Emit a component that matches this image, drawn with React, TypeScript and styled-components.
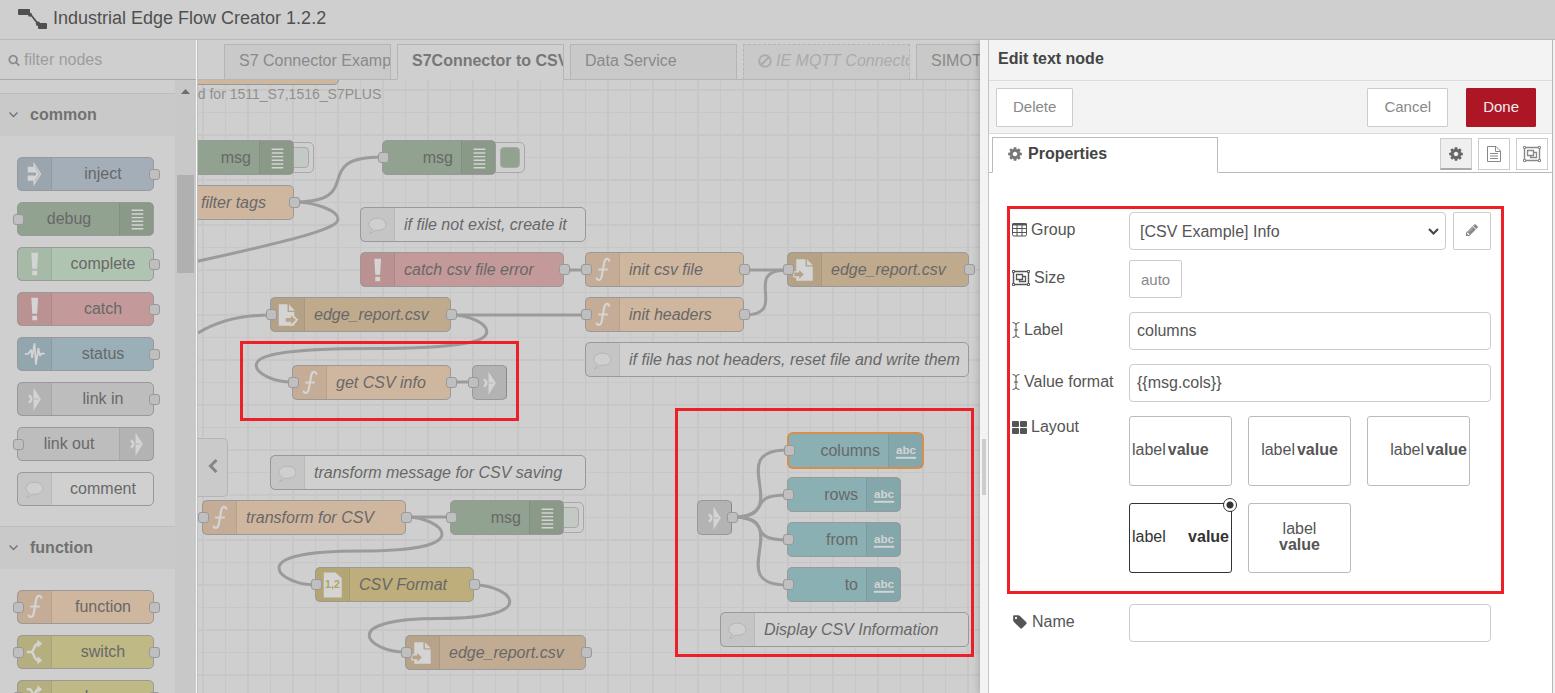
import React from "react";
import styled, { createGlobalStyle, css } from "styled-components";

const GlobalStyle = createGlobalStyle`
  *, *::before, *::after { box-sizing: border-box; }
  body { margin: 0; }
  body, button, input, select { font-family: "Liberation Sans", Arial, sans-serif; font-size: 16px; }
`;

const ink = {
  shade: "#cfcfcf",
  shadeDark: "#c9c9c9",
  line: "#b5b5b5",
  nodeLine: "#999999",
  glyph: "#d4d4d4",
  mark: "#ee2027",
};

/* ---------- icons ---------- */

type GlyphName =
  | "inject" | "debug" | "alert" | "status" | "link" | "comment"
  | "function" | "switch" | "change" | "fileIn" | "fileOut" | "csv" | "text";

const linkPaint = (
  <>
    <path d="M16 5.500 L23.500 17 L16 29 Z" fill={ink.glyph} />
    <path d="M11 13.500 A4 3.700 0 0 1 11 20.500" fill="none" stroke={ink.glyph} strokeWidth="2.500" />
    <path d="M15 17 H21" stroke="#b5b5b5" strokeWidth="1" />
  </>
);

const glyphs: Record<GlyphName, React.ReactNode> = {
  inject: (
    <>
      <path d="M10 9.500 H16 V4.500 L24 17 L16 29.500 V24 H10 V18.500 H18.500 V15.500 H10 Z" fill={ink.glyph} />
      <path d="M17.500 9.500 L22 17 L17.500 24.500" fill="none" stroke="#a0a9b3" strokeWidth="0.800" />
    </>
  ),
  debug: (
    <path d="M12 8H24M12 11.800H24M12 15.600H24M12 19.400H24M12 23.200H24M12 27H24" stroke={ink.glyph} strokeWidth="1.500" />
  ),
  alert: (
    <path d="M13.700 5.500 H20.700 L19.700 22 H14.700 Z M14.700 24 H19.700 V28.500 H14.700 Z" fill={ink.glyph} />
  ),
  status: (
    <path d="M7 17 H10.500 L13.500 12.500 L14.500 21 L17 6 L18.500 28 L21 11 L22.500 19 L24 16.500 H27.500" fill="none" stroke={ink.glyph} strokeWidth="1.800" strokeLinejoin="bevel" />
  ),
  link: linkPaint,
  comment: (
    <path d="M12 21.500 C5 18 8 10 17 10 C28 10 29 22.500 17 22.500 L14.500 22.300 Q12 25.500 8.500 26 Q11.500 24 12 21.500 Z" fill="#cfcfcf" stroke="#b3b3b3" strokeWidth="1" />
  ),
  function: (
    <>
      <path d="M24 7.500 C23 4.300 19.500 4.800 18.700 9.500 L16.300 23 C15.500 28 12.500 28 11 25.800" fill="none" stroke={ink.glyph} strokeWidth="2.300" strokeLinecap="round" />
      <path d="M12.500 16.500 H22.500" stroke={ink.glyph} strokeWidth="2" />
    </>
  ),
  switch: (
    <>
      <path d="M9 17 H14 C17 16 16 8.500 21 8.500 M14 17 C17 18 16 25.500 21 25.500" fill="none" stroke={ink.glyph} strokeWidth="2.500" />
      <path d="M20 4.500 L25 8.500 L20 12.500 Z M20 21.500 L25 25.500 L20 29.500 Z" fill={ink.glyph} />
    </>
  ),
  change: (
    <>
      <path d="M9 9 H12 C16 9 16 25 21 25 M9 25 H12 C16 25 16 9 21 9" fill="none" stroke={ink.glyph} strokeWidth="2.500" />
      <path d="M20 5 L25 9 L20 13 Z M20 21 L25 25 L20 29 Z" fill={ink.glyph} />
    </>
  ),
  fileIn: (
    <>
      <path d="M8 6 H17 V14 H24 V18 L28 22 L24 27 V28 H8 Z" fill={ink.glyph} />
      <path d="M18.500 6 L24.500 12.500 H18.500 Z" fill={ink.glyph} />
      <path d="M14.500 19.500 H20 V16 L26.500 22 L20 28 V24.500 H14.500 Z" fill="#b9a58a" stroke={ink.glyph} strokeWidth="1.200" />
    </>
  ),
  fileOut: (
    <>
      <path d="M8.500 6 H18 V13.500 H25.500 V28 H8.500 Z" fill={ink.glyph} />
      <path d="M19.500 6 L25.500 12 H19.500 Z" fill={ink.glyph} />
      <path d="M6 19 H11 V15.500 L17 21.500 L11 27.500 V24 H6 Z" fill="#b5a088" stroke={ink.glyph} strokeWidth="1.200" />
    </>
  ),
  csv: (
    <>
      <path d="M8 4 H20 L26.500 10 V30 H8 Z" fill={ink.glyph} />
      <text x="17" y="20.500" textAnchor="middle" fontSize="11" fontWeight="bold" fill="#b3a264">1,2</text>
    </>
  ),
  text: (
    <>
      <text x="17.500" y="20" textAnchor="middle" fontSize="12" fontWeight="bold" fill={ink.glyph}>abc</text>
      <path d="M7 24 H28" stroke={ink.glyph} strokeWidth="2" />
    </>
  ),
};

const GlyphSvg = styled.svg`
  display: block;
  width: 34px;
  height: 34px;
`;

const Glyph = ({ name }: { name: GlyphName }) => (
  <GlyphSvg viewBox="0 0 34 34" aria-hidden="true">{glyphs[name]}</GlyphSvg>
);

const solid = {
  cog: "M1152 896q0-106-75-181t-181-75-181 75-75 181 75 181 181 75 181-75 75-181zm512-109v222q0 12-8 23t-20 13l-185 28q-19 54-39 91 35 50 107 138 10 12 10 25t-9 23q-27 37-99 108t-94 71q-12 0-26-9l-138-108q-44 23-91 38-16 136-29 186-7 28-36 28h-222q-14 0-24.500-8.500t-11.500-21.500l-28-184q-49-16-90-37l-141 107q-10 9-25 9-14 0-25-11-126-114-165-168-7-10-7-23 0-12 8-23 15-21 51-66.500t54-70.500q-27-50-41-99l-183-27q-13-2-21-12.500t-8-23.500v-222q0-12 8-23t19-13l186-28q14-46 39-92-40-57-107-138-10-12-10-24 0-10 9-23 26-36 98.500-107.500t94.500-71.500q13 0 26 10l138 107q44-23 91-38 16-136 29-186 7-28 36-28h222q14 0 24.500 8.500t11.500 21.500l28 184q49 16 90 37l142-107q9-9 24-9 13 0 25 10 129 119 165 170 7 8 7 22 0 12-8 23-15 21-51 66.500t-54 70.500q26 50 41 98l183 28q13 2 21 12.500t8 23.500z",
  search: "M1216 832q0-185-131.500-316.500t-316.500-131.500-316.500 131.500-131.500 316.500 131.500 316.500 316.500 131.500 316.500-131.500 131.500-316.500zm512 832q0 52-38 90t-90 38q-54 0-90-38l-343-342q-179 124-399 124-143 0-273.500-55.500t-225-150-150-225-55.500-273.500 55.500-273.500 150-225 225-150 273.500-55.500 273.500 55.500 225 150 150 225 55.500 273.500q0 220-124 399l343 343q37 37 37 90z",
  tag: "M576 448q0-53-37.500-90.500t-90.500-37.500-90.500 37.500-37.500 90.500 37.500 90.500 90.500 37.500 90.500-37.500 37.500-90.500zm1067 576q0 53-37 90l-491 492q-39 37-91 37-53 0-90-37l-715-716q-38-37-64.500-101t-26.500-117v-416q0-52 38-90t90-38h416q53 0 117 26.500t102 64.500l715 714q37 39 37 91z",
  pencil: "M491 1536l91-91-235-235-91 91v107h128v128h107zm523-928q0-22-22-22-10 0-17 7l-542 542q-7 7-7 17 0 22 22 22 10 0 17-7l542-542q7-7 7-17zm-54-192l416 416-832 832h-416v-416zm683 96q0 53-37 90l-166 166-416-416 166-165q36-38 90-38 53 0 91 38l235 234q37 39 37 91z",
};

const Solid = ({ name, size = 16 }: { name: keyof typeof solid; size?: number }) => (
  <svg width={size} height={size} viewBox="0 0 1792 1792" fill="currentColor" aria-hidden="true">
    <path d={solid[name]} />
  </svg>
);

const GridIcon = () => (
  <svg width="15" height="14" viewBox="0 0 15 14" aria-hidden="true">
    <rect x="0.500" y="0.500" width="14" height="12.500" rx="1.500" fill="none" stroke="currentColor" />
    <path d="M0 1.500H15" stroke="currentColor" strokeWidth="2" />
    <path d="M0 5.500H15M0 9.500H15M5 2V13M10 2V13" stroke="currentColor" />
  </svg>
);

const SizeIcon = () => (
  <svg width="18" height="16" viewBox="0 0 18 16" fill="none" stroke="currentColor" aria-hidden="true">
    <path d="M2.500 1.500H15.500M2.500 14.500H15.500M1.500 2.500V13.500M16.500 2.500V13.500" strokeWidth="1.400" />
    <path d="M0.500 0.500h2v2h-2zM15.500 0.500h2v2h-2zM0.500 13.500h2v2h-2zM15.500 13.500h2v2h-2z" />
    <path d="M4.500 4.500h6v5h-6z M10.500 6.500h3v5h-6v-2" strokeWidth="1.300" />
  </svg>
);

const CursorIcon = () => (
  <svg width="8" height="16" viewBox="0 0 8 16" fill="none" stroke="currentColor" aria-hidden="true">
    <path d="M0.500 0.500Q4 0.500 4 3V13Q4 15.500 0.500 15.500M7.500 0.500Q4 0.500 4 3M7.500 15.500Q4 15.500 4 13M2 8H6" />
  </svg>
);

const TilesIcon = () => (
  <svg width="15" height="13" viewBox="0 0 15 13" fill="currentColor" aria-hidden="true">
    <rect width="7" height="6" rx="1" /><rect x="8" width="7" height="6" rx="1" />
    <rect y="7" width="7" height="6" rx="1" /><rect x="8" y="7" width="7" height="6" rx="1" />
  </svg>
);

const PageIcon = () => (
  <svg width="14" height="16" viewBox="0 0 14 16" fill="none" stroke="currentColor" aria-hidden="true">
    <path d="M0.500 0.500H9L13.500 5V15.500H0.500Z M8.500 0.500V5.500H13.500 M3 7.500H11M3 10H11M3 12.500H11" />
  </svg>
);

const BanSvg = styled.svg`
  flex: none;
  width: 14px;
  height: 14px;
`;

const BanIcon = () => (
  <BanSvg viewBox="0 0 14 14" fill="none" stroke="currentColor" strokeWidth="2" aria-hidden="true">
    <circle cx="7" cy="7" r="5.800" /><path d="M11 3L3 11" />
  </BanSvg>
);

const Logo = () => (
  <svg width="30" height="21" viewBox="0 0 30 21" fill="#4f4f4f" aria-hidden="true">
    <rect width="12" height="6" rx="1" />
    <rect x="20" y="14" width="9" height="6" rx="1" />
    <path d="M10 3.500 C14 5 17 13 22 16.500" fill="none" stroke="#4f4f4f" strokeWidth="1.800" />
    <circle cx="12" cy="5.800" r="2" /><circle cx="20" cy="14.800" r="2.200" />
  </svg>
);

/* ---------- page frame ---------- */

const Page = styled.div`
  display: flex;
  flex-direction: column;
  height: 100vh;
  overflow: hidden;
  background: ${ink.shade};
  color: #666;
`;

const Header = styled.header`
  display: flex;
  flex: none;
  align-items: center;
  gap: 5px;
  height: 40px;
  padding: 0 18px;
  border-bottom: 1px solid #bababa;
`;

const Title = styled.h1`
  margin: 0;
  padding-bottom: 4px;
  font-size: 18px;
  font-weight: normal;
  line-height: 20px;
  color: #505050;
`;

const Main = styled.main`
  display: flex;
  flex: 1;
  min-height: 0;
  overflow: hidden;
`;

/* ---------- palette ---------- */

const Palette = styled.aside`
  display: flex;
  flex: none;
  flex-direction: column;
  width: 198px;
  border-right: 1px solid #c0c0c0;
  box-shadow: inset -1px 0 #f6f6f6;
`;

const SearchBar = styled.label`
  display: flex;
  flex: none;
  align-items: center;
  gap: 4px;
  height: 40px;
  margin-right: 1px;
  padding: 0 8px;
  border-bottom: 1px solid #a9a9a9;
  color: #8a8a8a;
`;

const SearchInput = styled.input`
  flex: 1;
  min-width: 0;
  padding: 0;
  border: 0;
  outline: 0;
  background: none;
  &::placeholder { color: #9d9d9d; opacity: 1; }
`;

const PaletteBody = styled.div`
  display: flex;
  flex: 1;
  min-height: 0;
  margin-right: 1px;
`;

const PaletteList = styled.div`
  flex: 1;
  padding-top: 13px;
  overflow: hidden;
`;

const ScrollTrack = styled.div`
  display: flex;
  flex: none;
  flex-direction: column;
  align-items: center;
  width: 21px;
  padding-top: 9px;
  background: #c8c8c8;
`;

const ScrollArrow = styled.svg`
  flex: none;
  width: 9px;
  height: 5px;
`;

const ScrollThumb = styled.div`
  flex: none;
  width: 17px;
  height: 98px;
  margin-top: 81px;
  background: #b0b0b0;
`;

const Category = styled.h2`
  display: flex;
  align-items: center;
  gap: 12px;
  height: 43px;
  margin: 0;
  padding: 0 9px;
  border-top: 1px solid #bdbdbd;
  background: #c9c9c9;
  font-size: 16px;
  color: #717171;
`;

const CategoryNodes = styled.div`
  display: flex;
  flex-direction: column;
  gap: 11px;
  padding: 21px 21px 20px 17px;
`;

/* ---------- nodes ---------- */

interface Skin { $color: string; $selected?: boolean }

const nodeSkin = css<Skin>`
  display: flex;
  height: 34px;
  border: 1px solid ${ink.nodeLine};
  border-radius: 5px;
  background: ${(p) => p.$color};
  line-height: 32px;
  white-space: nowrap;
`;

const PaletteItem = styled.div<Skin>`
  ${nodeSkin}
  position: relative;
`;

const CanvasItem = styled.div<Skin & { $x: number; $y: number; $w: number }>`
  ${nodeSkin}
  position: absolute;
  left: ${(p) => p.$x}px;
  top: ${(p) => p.$y}px;
  width: ${(p) => p.$w}px;
  height: 35px;
  line-height: 34px;
  ${(p) => p.$selected && "box-shadow: 0 0 0 1px #d78e4c; border-color: #d78e4c;"}
`;

const IconZone = styled.div<{ $right?: boolean }>`
  display: flex;
  flex: none;
  align-items: center;
  order: ${(p) => (p.$right ? 1 : 0)};
  width: 34px;
  overflow: hidden;
  background: rgba(0, 0, 0, 0.05);
  ${(p) => (p.$right ? "border-left" : "border-right")}: 1px solid rgba(0, 0, 0, 0.06);
`;

const NodeLabel = styled.span<{ $align: "left" | "center" | "right"; $italic?: boolean }>`
  flex: 1;
  min-width: 0;
  padding: 0 8px 0 9px;
  text-align: ${(p) => p.$align};
  font-style: ${(p) => (p.$italic ? "italic" : "normal")};
  color: #686868;
`;

const Port = styled.i<{ $side: "in" | "out" }>`
  position: absolute;
  top: 11px;
  ${(p) => (p.$side === "in" ? "left: -5px" : "right: -7px")};
  width: 11px;
  height: 11px;
  border: 1px solid ${ink.nodeLine};
  border-radius: 3px;
  background: #bfbfbf;
`;

const Toggle = styled.button<{ $on?: boolean }>`
  position: absolute;
  z-index: -1;
  top: 1px;
  right: ${(p) => (p.$on ? "-30px" : "-21px")};
  width: 36px;
  height: 31px;
  padding: 4px 4px 4px 0;
  border: 1px solid #a8a8a8;
  border-radius: 5px;
  background: ${ink.shade};
  &::after {
    content: "";
    display: block;
    width: ${(p) => (p.$on ? "20px" : "26px")};
    height: 100%;
    margin-left: auto;
    border: 1px solid #a8a8a8;
    border-radius: 4px;
    background: ${(p) => (p.$on ? "#91a28f" : "#c3c9c4")};
  }
`;

interface NodeSpec {
  label?: string;
  color: string;
  icon?: GlyphName;
  right?: boolean;
  input?: boolean;
  output?: boolean;
}

const colors = {
  debug: "#92a290",
  catch: "#c39a99",
  func: "#cfb69f",
  file: "#bfaa8e",
  link: "#bdbdbd",
  comment: "#d0d0d0",
  ui: "#8bb0b4",
};

const common: NodeSpec[] = [
  { label: "inject", color: "#a4aeb8", icon: "inject", output: true },
  { label: "debug", color: colors.debug, icon: "debug", right: true, input: true },
  { label: "complete", color: "#b0c5b1", icon: "alert", output: true },
  { label: "catch", color: colors.catch, icon: "alert", output: true },
  { label: "status", color: "#9aafb8", icon: "status", output: true },
  { label: "link in", color: colors.link, icon: "link", output: true },
  { label: "link out", color: colors.link, icon: "link", right: true, input: true },
  { label: "comment", color: colors.comment, icon: "comment" },
];

const functions: NodeSpec[] = [
  { label: "function", color: colors.func, icon: "function", input: true, output: true },
  { label: "switch", color: "#bfb986", icon: "switch", input: true, output: true },
  { label: "change", color: "#bfb986", icon: "change", input: true, output: true },
];

const NodeContent = ({ node, align, italic }: { node: NodeSpec; align: "left" | "center" | "right"; italic?: boolean }) => (
  <>
    {node.icon && <IconZone $right={node.right}><Glyph name={node.icon} /></IconZone>}
    {node.label && <NodeLabel $align={align} $italic={italic}>{node.label}</NodeLabel>}
    {node.input && <Port $side="in" />}
    {node.output && <Port $side="out" />}
  </>
);

const PaletteGroup = ({ name, nodes }: { name: string; nodes: NodeSpec[] }) => (
  <section>
    <Category>
      <svg width="9" height="6" viewBox="0 0 9 6" fill="none" stroke="currentColor" strokeWidth="1.300" aria-hidden="true">
        <path d="M0.500 0.500L4.500 4.500L8.500 0.500" />
      </svg>
      {name}
    </Category>
    <CategoryNodes>
      {nodes.map((n) => (
        <PaletteItem key={n.label} $color={n.color}><NodeContent node={n} align="center" /></PaletteItem>
      ))}
    </CategoryNodes>
  </section>
);

/* ---------- workspace ---------- */

const Workspace = styled.section`
  display: flex;
  flex: 1;
  flex-direction: column;
  min-width: 0;
  overflow: hidden;
`;

const TabBar = styled.nav`
  display: flex;
  flex: none;
  align-items: flex-end;
  gap: 6px;
  height: 40px;
  padding-left: 26px;
  box-shadow: inset 0 -1px ${ink.line};
`;

const Tab = styled.button<{ $state?: "active" | "disabled" }>`
  display: flex;
  flex: none;
  align-items: center;
  gap: 4px;
  width: 167px;
  height: 36px;
  padding: 0 0 2px 14px;
  overflow: hidden;
  border: 1px solid ${ink.line};
  background: ${ink.shadeDark};
  color: #8a8a8a;
  white-space: nowrap;
  ${(p) => p.$state === "active" && css`
    border-bottom-color: ${ink.shade};
    background: ${ink.shade};
    color: #777;
    font-weight: bold;
  `}
  ${(p) => p.$state === "disabled" && css`
    border-style: dashed;
    border-bottom-style: solid;
    color: #ababab;
    font-style: italic;
  `}
`;

const Canvas = styled.div`
  position: relative;
  z-index: 0;
  flex: 1;
  overflow: hidden;
  background-color: ${ink.shade};
  background-image:
    linear-gradient(to right, #c7c7c7 2px, transparent 2px),
    linear-gradient(to right, #c7c7c7 1px, transparent 1px),
    linear-gradient(#c7c7c7 2px, transparent 2px),
    linear-gradient(#c7c7c7 1px, transparent 1px);
  background-size: 45px 45px;
  background-position: 4px 0, 27px 0, 0 9px, 0 32px;
`;

const Wires = styled.svg`
  position: absolute;
  inset: 0;
  width: 100%;
  height: 100%;
  fill: none;
  stroke: #9b9b9b;
  stroke-width: 3;
`;

const CanvasNote = styled.span`
  position: absolute;
  left: -8px;
  top: 6px;
  font-size: 14px;
  line-height: 16px;
  white-space: nowrap;
  color: #8f8f8f;
`;

const PaletteToggle = styled.button`
  position: absolute;
  left: 0;
  top: 358px;
  width: 30px;
  height: 59px;
  padding: 0;
  border: 1px solid ${ink.line};
  border-left: 0;
  border-radius: 0 5px 5px 0;
  background: #cacaca;
  color: #858585;
`;

const Mark = styled.div<{ $x: number; $y: number; $w: number; $h: number }>`
  position: absolute;
  left: ${(p) => p.$x}px;
  top: ${(p) => p.$y}px;
  width: ${(p) => p.$w}px;
  height: ${(p) => p.$h}px;
  border: 3px solid ${ink.mark};
  pointer-events: none;
`;

interface FlowNode extends NodeSpec {
  x: number;
  y: number;
  w: number;
  plain?: boolean;
  selected?: boolean;
  toggle?: "on" | "off";
}

const flow: FlowNode[] = [
  { x: -60, y: -30, w: 201, color: colors.func },
  { label: "msg", x: -18, y: 60, w: 114, color: colors.debug, icon: "debug", right: true, plain: true, toggle: "off" },
  { label: "msg", x: 184, y: 60, w: 114, color: colors.debug, icon: "debug", right: true, plain: true, input: true, toggle: "on" },
  { label: "filter tags", x: -41, y: 105, w: 137, color: colors.func, icon: "function", output: true },
  { label: "if file not exist, create it", x: 162, y: 127, w: 226, color: colors.comment, icon: "comment" },
  { label: "catch csv file error", x: 162, y: 172, w: 204, color: colors.catch, icon: "alert", output: true },
  { label: "init csv file", x: 387, y: 172, w: 159, color: colors.func, icon: "function", input: true, output: true },
  { label: "edge_report.csv", x: 589, y: 172, w: 182, color: colors.file, icon: "fileOut", input: true, output: true },
  { label: "edge_report.csv", x: 72, y: 217, w: 181, color: colors.file, icon: "fileIn", input: true, output: true },
  { label: "init headers", x: 387, y: 217, w: 159, color: colors.func, icon: "function", input: true, output: true },
  { label: "if file has not headers, reset file and write them", x: 387, y: 262, w: 384, color: colors.comment, icon: "comment" },
  { label: "get CSV info", x: 94, y: 285, w: 159, color: colors.func, icon: "function", input: true, output: true },
  { x: 274, y: 285, w: 35, color: colors.link, icon: "link", input: true },
  { label: "transform message for CSV saving", x: 72, y: 375, w: 316, color: colors.comment, icon: "comment" },
  { label: "transform for CSV", x: 4, y: 420, w: 204, color: colors.func, icon: "function", input: true, output: true },
  { label: "msg", x: 252, y: 420, w: 114, color: colors.debug, icon: "debug", right: true, plain: true, input: true, toggle: "off" },
  { label: "CSV Format", x: 117, y: 487, w: 159, color: "#bdae7b", icon: "csv", input: true, output: true },
  { label: "edge_report.csv", x: 207, y: 555, w: 181, color: "#c1ab92", icon: "fileOut", input: true, output: true },
  { x: 499, y: 420, w: 35, color: colors.link, icon: "link", output: true },
  { label: "columns", x: 590, y: 353, w: 135, color: colors.ui, icon: "text", right: true, plain: true, input: true, selected: true },
  { label: "rows", x: 589, y: 397, w: 114, color: colors.ui, icon: "text", right: true, plain: true, input: true },
  { label: "from", x: 589, y: 442, w: 114, color: colors.ui, icon: "text", right: true, plain: true, input: true },
  { label: "to", x: 589, y: 487, w: 114, color: colors.ui, icon: "text", right: true, plain: true, input: true },
  { label: "Display CSV Information", x: 522, y: 532, w: 249, color: colors.comment, icon: "comment" },
];

/* Start and end of every wire: x1, y1, x2, y2. */
const links: [number, number, number, number][] = [
  [96, 122, 184, 77],
  [366, 190, 387, 190],
  [546, 190, 589, 190],
  [546, 235, 589, 190],
  [253, 235, 387, 235],
  [253, 235, 94, 302],
  [253, 302, 274, 302],
  [208, 437, 252, 437],
  [208, 437, 117, 505],
  [276, 505, 207, 572],
  [534, 437, 589, 370],
  [534, 437, 589, 415],
  [534, 437, 589, 460],
  [534, 437, 589, 505],
];

const REACH = 112;
const BEND = 17;

function wirePath([x1, y1, x2, y2]: [number, number, number, number]) {
  const dx = x2 - x1;
  const dy = y2 - y1;
  if (dx > 0) {
    const length = Math.hypot(dx, dy);
    const pull = 0.75 * Math.min(1, length / REACH) * REACH;
    return `M${x1} ${y1}C${x1 + pull} ${y1} ${x2 - pull} ${y2} ${x2} ${y2}`;
  }
  const near = Math.min(Math.abs(dx), Math.abs(dy));
  const pull = (0.4 - 0.2 * Math.max(0, (REACH - near) / REACH)) * REACH;
  const midX = x2 - dx / 2;
  const midY = y2 - dy / 2;
  const topX = x1 + pull;
  const topY = Math.min((y2 + midY) / 2 - dy / 2, y1 + BEND);
  const lowX = x2 - pull;
  const lowY = Math.max((y2 + midY) / 2, y2 - BEND);
  const turnX = (x1 + topX) / 2;
  return [
    `M${x1} ${y1}C${turnX} ${y1} ${topX} ${topY - BEND / 2} ${topX} ${topY}`,
    `S${turnX} ${Math.min(midY, topY + BEND)} ${midX} ${midY}`,
    `S${lowX} ${lowY - BEND / 2} ${lowX} ${lowY}`,
    `S${(x2 + lowX) / 2} ${y2} ${x2} ${y2}`,
  ].join("");
}

/* ---------- edit tray ---------- */

const Tray = styled.section`
  position: relative;
  z-index: 1;
  display: flex;
  flex: none;
  width: 575px;
  background: #f3f3f3;
  box-shadow: -1px 0 7px rgba(0, 0, 0, 0.2);
`;

const Grip = styled.div`
  display: flex;
  flex: none;
  align-items: center;
  width: 9px;
  padding: 0 2px;
  border-right: 1px solid #c4c4c4;
  &::before {
    content: "";
    width: 4px;
    height: 56px;
    margin-top: 200px;
    background: #cdcdcd;
  }
`;

const TrayPanel = styled.div`
  display: flex;
  flex: 1;
  flex-direction: column;
  min-width: 0;
  margin-right: 2px;
  border-right: 1px solid #b5b5b5;
  background: #fff;
`;

const TrayTitle = styled.h2`
  flex: none;
  height: 41px;
  margin: 0;
  padding: 0 9px;
  border-bottom: 1px solid #dcdcdc;
  background: #f3f3f3;
  font-size: 16px;
  line-height: 37px;
  color: #444;
`;

const TrayToolbar = styled.div`
  display: flex;
  flex: none;
  align-items: center;
  gap: 18px;
  height: 53px;
  padding: 0 16px 0 7px;
  border-bottom: 1px solid #dcdcdc;
  background: #f3f3f3;
`;

const Button = styled.button<{ $primary?: boolean; $push?: boolean }>`
  height: 39px;
  margin-right: ${(p) => (p.$push ? "auto" : "0")};
  padding: 0 16px 1px;
  border: 1px solid ${(p) => (p.$primary ? "#ad1625" : "#ccc")};
  border-radius: 1px;
  background: ${(p) => (p.$primary ? "#ad1625" : "#fff")};
  font-size: 15px;
  color: ${(p) => (p.$primary ? "#eee" : "#888")};
`;

const TrayTabs = styled.div`
  display: flex;
  flex: none;
  align-items: flex-end;
  gap: 6px;
  height: 39px;
  padding: 0 4px 0 3px;
  box-shadow: inset 0 -1px #bbb;
`;

const TrayTab = styled.button`
  display: flex;
  align-items: center;
  gap: 5px;
  width: 226px;
  height: 36px;
  margin-right: auto;
  padding: 0 14px 3px;
  border: 1px solid #bbb;
  border-bottom-color: #fff;
  background: #fff;
  font-weight: bold;
  color: #444;
  svg { color: #777; }
`;

const IconButton = styled.button<{ $active?: boolean }>`
  display: flex;
  align-items: center;
  justify-content: center;
  width: 32px;
  height: 32px;
  margin-bottom: 3px;
  padding: 0;
  border: 1px solid #ccc;
  border-bottom: ${(p) => (p.$active ? "2px solid #aaa" : "1px solid #ccc")};
  background: ${(p) => (p.$active ? "#efefef" : "#fff")};
  color: ${(p) => (p.$active ? "#666" : "#888")};
`;

const Form = styled.form`
  flex: 1;
  padding: 39px 61px 0 23px;
  color: #555;
`;

const MarkedFields = styled.div`
  position: relative;
  display: flex;
  flex-direction: column;
  gap: 14px;
  margin-bottom: 31px;
  &::after {
    content: "";
    position: absolute;
    inset: -6px -13px -21px -5px;
    border: 3px solid ${ink.mark};
    pointer-events: none;
  }
`;

const Row = styled.div`
  display: flex;
  align-items: flex-start;
`;

const RowLabel = styled.label`
  display: flex;
  flex: none;
  align-items: center;
  gap: 4px;
  width: 117px;
  height: 36px;
  white-space: nowrap;
`;

const LayoutHeading = styled(RowLabel).attrs({ as: "span" })`
  height: 22px;
`;

const fieldSkin = css`
  flex: 1;
  min-width: 0;
  height: 38px;
  border: 1px solid #ccc;
  border-radius: 4px;
  background-color: #fff;
  color: #555;
`;

const TextInput = styled.input`
  ${fieldSkin}
  padding: 0 7px;
`;

const SelectWrap = styled.span`
  position: relative;
  display: flex;
  flex: 1;
  margin-right: 7px;
  svg { position: absolute; right: 7px; top: 16px; pointer-events: none; }
`;

const Select = styled.select`
  ${fieldSkin}
  padding: 0 24px 0 10px;
  appearance: none;
`;

const SquareButton = styled(Button)`
  height: 38px;
  padding: 0 11px;
  border-radius: 2px;
`;

const FieldPair = styled.div`
  display: flex;
  flex-direction: column;
  gap: 10px;
`;

const Choices = styled.div`
  display: grid;
  grid-template-columns: repeat(3, 103px);
  gap: 17px 16px;
`;

type Arrange = "left" | "center" | "right" | "spread" | "stack";

const justify: Record<Arrange, string> = {
  left: "flex-start",
  center: "center",
  right: "flex-end",
  spread: "space-between",
  stack: "center",
};

const Choice = styled.label<{ $arrange: Arrange; $checked?: boolean }>`
  position: relative;
  display: flex;
  flex-direction: ${(p) => (p.$arrange === "stack" ? "column" : "row")};
  align-items: center;
  justify-content: ${(p) => justify[p.$arrange]};
  column-gap: 2px;
  height: 70px;
  padding: 0 2px 2px;
  border: 1px solid ${(p) => (p.$checked ? "#333" : "#bbb")};
  border-radius: 3px;
  line-height: 16px;
  color: ${(p) => (p.$checked ? "#333" : "#555")};
`;

const ChoiceRadio = styled.input`
  position: absolute;
  top: -6px;
  right: -6px;
  width: 14px;
  height: 14px;
  margin: 0;
  border: 1px solid #333;
  border-radius: 50%;
  appearance: none;
  background: radial-gradient(circle, #333 3px, #fff 4px);
  opacity: 0;
  &:checked { opacity: 1; }
`;

const arrangements: Arrange[] = ["left", "center", "right", "spread", "stack"];

const EditTray = () => {
  const [layout, setLayout] = React.useState<Arrange>("spread");
  return (
    <Tray>
      <Grip />
      <TrayPanel>
        <TrayTitle>Edit text node</TrayTitle>
        <TrayToolbar>
          <Button type="button" $push>Delete</Button>
          <Button type="button">Cancel</Button>
          <Button type="button" $primary>Done</Button>
        </TrayToolbar>
        <TrayTabs>
          <TrayTab type="button"><Solid name="cog" />Properties</TrayTab>
          <IconButton type="button" aria-label="Properties" $active><Solid name="cog" /></IconButton>
          <IconButton type="button" aria-label="Description"><PageIcon /></IconButton>
          <IconButton type="button" aria-label="Appearance"><SizeIcon /></IconButton>
        </TrayTabs>
        <Form>
          <MarkedFields>
            <FieldPair>
              <Row>
                <RowLabel htmlFor="group"><GridIcon />Group</RowLabel>
                <SelectWrap>
                  <Select id="group"><option>[CSV Example] Info</option></Select>
                  <svg width="11" height="7" viewBox="0 0 11 7" fill="none" stroke="#444" strokeWidth="2" aria-hidden="true">
                    <path d="M1 1L5.500 5.500L10 1" />
                  </svg>
                </SelectWrap>
                <SquareButton type="button" aria-label="Edit group"><Solid name="pencil" size={14} /></SquareButton>
              </Row>
              <Row>
                <RowLabel htmlFor="size"><SizeIcon />Size</RowLabel>
                <SquareButton type="button" id="size">auto</SquareButton>
              </Row>
            </FieldPair>
            <Row>
              <RowLabel htmlFor="label"><CursorIcon />Label</RowLabel>
              <TextInput id="label" defaultValue="columns" />
            </Row>
            <Row>
              <RowLabel htmlFor="format"><CursorIcon />Value format</RowLabel>
              <TextInput id="format" defaultValue="{{msg.cols}}" />
            </Row>
            <Row>
              <LayoutHeading><TilesIcon />Layout</LayoutHeading>
              <Choices role="radiogroup" aria-label="Layout">
                {arrangements.map((a) => (
                  <Choice key={a} $arrange={a} $checked={a === layout}>
                    <span>label</span>
                    <b>value</b>
                    <ChoiceRadio type="radio" name="layout" checked={a === layout} onChange={() => setLayout(a)} />
                  </Choice>
                ))}
              </Choices>
            </Row>
          </MarkedFields>
          <Row>
            <RowLabel htmlFor="name"><Solid name="tag" />Name</RowLabel>
            <TextInput id="name" />
          </Row>
        </Form>
      </TrayPanel>
    </Tray>
  );
};

export default function App() {
  return (
    <Page>
      <GlobalStyle />
      <Header>
        <Logo />
        <Title>Industrial Edge Flow Creator 1.2.2</Title>
      </Header>
      <Main>
        <Palette>
          <SearchBar>
            <Solid name="search" size={12} />
            <SearchInput placeholder="filter nodes" aria-label="filter nodes" />
          </SearchBar>
          <PaletteBody>
            <PaletteList>
              <PaletteGroup name="common" nodes={common} />
              <PaletteGroup name="function" nodes={functions} />
            </PaletteList>
            <ScrollTrack>
              <ScrollArrow viewBox="0 0 9 5" aria-hidden="true"><path d="M0 5L4.500 0L9 5Z" fill="#6d6d6d" /></ScrollArrow>
              <ScrollThumb />
            </ScrollTrack>
          </PaletteBody>
        </Palette>
        <Workspace>
          <TabBar>
            <Tab>S7 Connector Example</Tab>
            <Tab $state="active">S7Connector to CSV</Tab>
            <Tab>Data Service</Tab>
            <Tab $state="disabled"><BanIcon />IE MQTT Connector</Tab>
            <Tab>SIMOT</Tab>
          </TabBar>
          <Canvas>
            <Wires>
              <path d="M96 122C118 122 140 131 140 139S117 156 -18 185" />
              <path d="M0 253C18 242 42 235 72 235" />
              {links.map((l) => <path key={l.join()} d={wirePath(l)} />)}
            </Wires>
            <CanvasNote>ed for 1511_S7,1516_S7PLUS</CanvasNote>
            {flow.map((n) => (
              <CanvasItem key={`${n.x},${n.y}`} $x={n.x} $y={n.y} $w={n.w} $color={n.color} $selected={n.selected}>
                <NodeContent node={n} align={n.right ? "right" : "left"} italic={!n.plain} />
                {n.toggle && <Toggle type="button" aria-label="Toggle output" $on={n.toggle === "on"} />}
              </CanvasItem>
            ))}
            <PaletteToggle type="button" aria-label="Toggle palette">
              <svg width="10" height="14" viewBox="0 0 10 14" fill="none" stroke="currentColor" strokeWidth="3" aria-hidden="true">
                <path d="M8.500 1L2.500 7L8.500 13" />
              </svg>
            </PaletteToggle>
            <Mark $x={42} $y={261} $w={279} $h={80} />
            <Mark $x={477} $y={328} $w={299} $h={249} />
          </Canvas>
        </Workspace>
        <EditTray />
      </Main>
    </Page>
  );
}
